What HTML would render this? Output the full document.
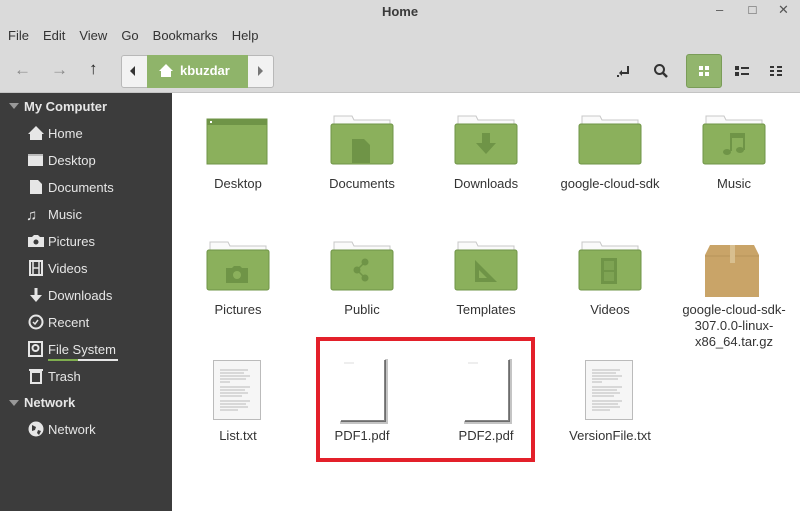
<!DOCTYPE html>
<html><head><meta charset="utf-8"><style>
*{margin:0;padding:0;box-sizing:border-box}
body{width:800px;height:511px;overflow:hidden;background:#fff;font-family:"Liberation Sans","DejaVu Sans",sans-serif;font-size:13px;color:#333;position:relative}
.top{position:absolute;left:0;top:0;width:800px;height:93px;background:#dadada;border-bottom:1px solid #c4c4c4}
.title{position:absolute;top:4px;width:800px;text-align:center;font-weight:bold;font-size:13px;color:#3a3a3a}
.menu{position:absolute;top:28px;left:8px;font-size:13px;color:#333}
.menu span{margin-right:14px}
.side{position:absolute;left:0;top:93px;width:172px;height:418px;background:#3c3c3c;color:#e6e6e6}
.side div{position:absolute;font-size:13px;white-space:nowrap}
.side .h{font-weight:bold;left:24px}
.side .i{left:48px}
.ic{position:absolute;left:28px}
.it{position:absolute;text-align:center;width:124px;font-size:13px;color:#333;line-height:16px}
.red{position:absolute;left:316px;top:337px;width:219px;height:125px;border:4px solid #e3202a}
</style></head><body>
<div class="top">
<div class="title">Home</div>
<div class="title" style="left:0;width:auto;left:716px;font-weight:normal;top:2px;color:#555">–&nbsp;&nbsp;&nbsp;&nbsp;&nbsp;&nbsp;&nbsp;□&nbsp;&nbsp;&nbsp;&nbsp;&nbsp;&nbsp;✕</div>
<div class="menu"><span>File</span><span>Edit</span><span>View</span><span>Go</span><span>Bookmarks</span><span>Help</span></div>
<div style="position:absolute;top:60px;left:14px;color:#888;font-size:17px">←</div>
<div style="position:absolute;top:60px;left:51px;color:#888;font-size:17px">→</div>
<div style="position:absolute;top:59px;left:89px;color:#222;font-size:17px;font-weight:bold">↑</div>
<div style="position:absolute;left:121px;top:55px;width:153px;height:33px;border:1px solid #b8b8b8;border-radius:3px;background:#f2f2f2"></div>
<div style="position:absolute;left:130px;top:66px;width:0;height:0;border-top:5px solid transparent;border-bottom:5px solid transparent;border-right:5px solid #333"></div>
<div style="position:absolute;left:147px;top:55px;width:101px;height:33px;background:#8fb46a"></div>
<svg style="position:absolute;left:158px;top:63px" width="16" height="15"><path d="M8 1L1 8h2v6h10V8h2z" fill="#fff"/></svg>
<div style="position:absolute;left:180px;top:63px;color:#fff;font-weight:bold;font-size:13px">kbuzdar</div>
<div style="position:absolute;left:258px;top:66px;width:0;height:0;border-top:5px solid transparent;border-bottom:5px solid transparent;border-left:5px solid #777"></div>
<svg style="position:absolute;left:616px;top:63px" width="18" height="16"><path d="M12 3v7H6" stroke="#333" stroke-width="2" fill="none"/><path d="M6 7l-3 3 3 3z" fill="#333"/><rect x="1" y="12" width="2" height="2" fill="#333"/></svg>
<svg style="position:absolute;left:653px;top:63px" width="16" height="16"><circle cx="6.5" cy="6.5" r="4.5" stroke="#333" stroke-width="2" fill="none"/><path d="M10 10l4 4" stroke="#333" stroke-width="2.5"/></svg>
<div style="position:absolute;left:686px;top:54px;width:36px;height:34px;background:#92b56d;border:1px solid #7a9c58;border-radius:3px"></div>
<svg style="position:absolute;left:698px;top:65px" width="12" height="12"><rect x="1" y="1" width="4" height="4" fill="#fff"/><rect x="7" y="1" width="4" height="4" fill="#fff"/><rect x="1" y="7" width="4" height="4" fill="#fff"/><rect x="7" y="7" width="4" height="4" fill="#fff"/></svg>
<svg style="position:absolute;left:735px;top:65px" width="14" height="12"><rect x="0" y="1" width="4" height="4" fill="#333"/><rect x="6" y="2" width="8" height="2" fill="#333"/><rect x="0" y="7" width="4" height="4" fill="#333"/><rect x="6" y="8" width="8" height="2" fill="#333"/></svg>
<svg style="position:absolute;left:770px;top:65px" width="14" height="12"><g fill="#333"><rect x="0" y="1" width="4" height="2"/><rect x="0" y="5" width="4" height="2"/><rect x="0" y="9" width="4" height="2"/><rect x="7" y="1" width="5" height="2"/><rect x="7" y="5" width="5" height="2"/><rect x="7" y="9" width="5" height="2"/></g></svg>
</div>

<div class="side">
<div style="left:9px;top:10px;width:0;height:0;border-left:5px solid transparent;border-right:5px solid transparent;border-top:6px solid #999"></div>
<div class="h" style="top:6px">My Computer</div>
<svg class="ic" style="top:32px;position:absolute" width="16" height="16"><path d="M8 1L0 9h2v6h12V9h2z" fill="#e6e6e6"/></svg><div class="i" style="top:33px">Home</div>
<svg style="position:absolute;left:28px;top:60px" width="16" height="14"><rect x="0" y="1" width="15" height="12" fill="#e6e6e6"/><rect x="0" y="1" width="15" height="2" fill="#bbb"/></svg><div class="i" style="top:60px">Desktop</div>
<svg style="position:absolute;left:29px;top:86px" width="14" height="16"><path d="M1 1h8l4 4v10H1z" fill="#e6e6e6"/></svg><div class="i" style="top:87px">Documents</div>
<div class="i" style="top:114px;left:26px;font-size:15px">♫</div><div class="i" style="top:114px">Music</div>
<svg style="position:absolute;left:28px;top:141px" width="16" height="14"><path d="M0 3h4l2-2h4l2 2h4v10H0z" fill="#e6e6e6"/><circle cx="8" cy="8" r="2.5" fill="#3c3c3c"/></svg><div class="i" style="top:141px">Pictures</div>
<svg style="position:absolute;left:29px;top:167px" width="14" height="16"><rect x="1" y="1" width="12" height="14" fill="none" stroke="#e6e6e6" stroke-width="2"/><path d="M4 1v14M10 1v14M4 8h6" stroke="#e6e6e6" stroke-width="1.5"/></svg><div class="i" style="top:168px">Videos</div>
<svg style="position:absolute;left:29px;top:194px" width="14" height="16"><path d="M7 1v10" stroke="#e6e6e6" stroke-width="3"/><path d="M1 8l6 7 6-7z" fill="#e6e6e6"/></svg><div class="i" style="top:195px">Downloads</div>
<svg style="position:absolute;left:28px;top:221px" width="16" height="16"><circle cx="8" cy="8" r="6.5" fill="none" stroke="#e6e6e6" stroke-width="2"/><path d="M5 8l2 2 3-4" stroke="#e6e6e6" stroke-width="1.5" fill="none"/></svg><div class="i" style="top:222px">Recent</div>
<svg style="position:absolute;left:28px;top:248px" width="16" height="16"><rect x="1" y="1" width="13" height="14" fill="none" stroke="#e6e6e6" stroke-width="2"/><circle cx="7.5" cy="7" r="3" fill="none" stroke="#e6e6e6" stroke-width="2"/></svg><div class="i" style="top:249px">File System</div>
<div style="left:48px;top:266px;width:70px;height:2px;background:#e6e6e6"></div><div style="left:48px;top:266px;width:30px;height:2px;background:#7fae4f"></div>
<svg style="position:absolute;left:29px;top:275px" width="14" height="16"><path d="M0 2h14" stroke="#e6e6e6" stroke-width="2"/><rect x="2" y="4" width="10" height="11" fill="none" stroke="#e6e6e6" stroke-width="2"/></svg><div class="i" style="top:276px">Trash</div>
<div style="left:9px;top:307px;width:0;height:0;border-left:5px solid transparent;border-right:5px solid transparent;border-top:6px solid #999"></div>
<div class="h" style="top:302px">Network</div>
<svg style="position:absolute;left:28px;top:328px" width="16" height="16"><circle cx="8" cy="8" r="7.5" fill="#e6e6e6"/><path d="M4 4l4 2-1 3-3 1zM10 9l3 1-2 4-2-2z" fill="#3c3c3c"/></svg><div class="i" style="top:329px">Network</div>
</div>

<svg width="800" height="511" style="position:absolute;left:0;top:0">
<defs>
<g id="f">
<path d="M3 0h18l2 4h36v10H3z" fill="#fafafa" stroke="#c8c8c8"/>
<rect x="0" y="8" width="62" height="40" rx="2" fill="#8bb05c" stroke="#6f9447"/>
</g>
<g id="txt"><rect x="0.5" y="0.5" width="47" height="59" fill="#f6f6f6" stroke="#bbb"/>
<g stroke="#bbb" stroke-width="1"><path d="M7 10h28M7 13h24M7 16h30M7 19h26M7 22h10M7 27h30M7 30h25M7 33h28M7 36h22M7 41h30M7 44h26M7 47h28M7 50h18"/></g></g>
<g id="pdf"><rect x="2" y="2" width="48" height="65" fill="#555" opacity="0.35"/><rect x="0" y="0" width="47" height="64" fill="#fff"/><path d="M47 3v61H3" stroke="#333" stroke-width="2" fill="none" opacity="0.6"/><path d="M6 6h10" stroke="#ddd"/></g>
</defs>
<g transform="translate(207,119)"><rect x="0" y="0" width="60" height="45" fill="#8bb05c" stroke="#6f9447"/><rect x="0" y="0" width="60" height="6" fill="#6f9447"/><rect x="3" y="2" width="2" height="2" fill="#fff"/></g>
<use href="#f" transform="translate(331,116)"/>
<path d="M352 139h12l6 6v18h-18z" fill="#6f9447"/>
<use href="#f" transform="translate(455,116)"/>
<path d="M482 133h8v10h6l-10 11-10-11h6z" fill="#6f9447"/>
<use href="#f" transform="translate(579,116)"/>
<use href="#f" transform="translate(703,116)"/>
<path d="M730 134h14v16" stroke="#6f9447" stroke-width="2" fill="none"/><rect x="730" y="134" width="14" height="4" fill="#6f9447"/><path d="M731 134v17" stroke="#6f9447" stroke-width="2"/><ellipse cx="727" cy="152" rx="4" ry="3" fill="#6f9447"/><ellipse cx="740" cy="150" rx="4" ry="3" fill="#6f9447"/>
<use href="#f" transform="translate(207,242)"/>
<path d="M226 268h6l2-2h6l2 2h6v15h-22z" fill="#6f9447"/><circle cx="237" cy="275" r="4" fill="#8bb05c"/>
<use href="#f" transform="translate(331,242)"/>
<g fill="#6f9447" stroke="#6f9447"><circle cx="365" cy="262" r="3"/><circle cx="357" cy="270" r="3"/><circle cx="365" cy="278" r="3"/><path d="M365 262l-8 8 8 8" fill="none" stroke-width="1.5"/></g>
<use href="#f" transform="translate(455,242)"/>
<path d="M475 260v22h22z M479 270v8h8z" fill="#6f9447" fill-rule="evenodd"/>
<use href="#f" transform="translate(579,242)"/>
<rect x="601" y="258" width="16" height="26" fill="#6f9447"/><rect x="604" y="261" width="10" height="9" fill="#7ea353"/><rect x="604" y="272" width="10" height="9" fill="#7ea353"/>
<path d="M710 245h44l5 10v42h-54v-42z" fill="#c9a468"/><path d="M705 256h54" stroke="#b8935a"/><rect x="730" y="245" width="5" height="18" fill="#d8bf8f"/>
<use href="#txt" transform="translate(213,360)"/>
<use href="#txt" transform="translate(585,360)"/>
<use href="#pdf" transform="translate(338,357)"/>
<use href="#pdf" transform="translate(462,357)"/>
</svg>

<div class="it" style="left:176px;top:176px">Desktop</div>
<div class="it" style="left:300px;top:176px">Documents</div>
<div class="it" style="left:424px;top:176px">Downloads</div>
<div class="it" style="left:548px;top:176px">google-cloud-sdk</div>
<div class="it" style="left:672px;top:176px">Music</div>
<div class="it" style="left:176px;top:302px">Pictures</div>
<div class="it" style="left:300px;top:302px">Public</div>
<div class="it" style="left:424px;top:302px">Templates</div>
<div class="it" style="left:548px;top:302px">Videos</div>
<div class="it" style="left:672px;top:302px;line-height:16px">google-cloud-sdk-<br>307.0.0-linux-<br>x86_64.tar.gz</div>
<div class="it" style="left:176px;top:428px">List.txt</div>
<div class="it" style="left:300px;top:428px">PDF1.pdf</div>
<div class="it" style="left:424px;top:428px">PDF2.pdf</div>
<div class="it" style="left:548px;top:428px">VersionFile.txt</div>
<div class="red"></div>
</body></html>
